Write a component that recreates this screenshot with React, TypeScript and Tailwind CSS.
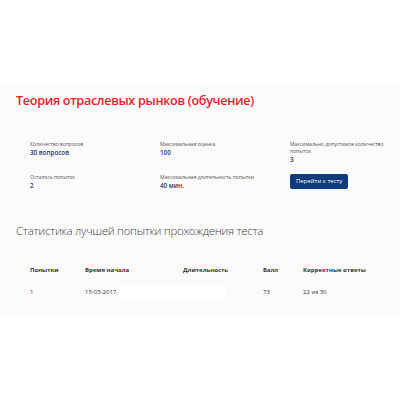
import React from 'react';

const info = [
  { label: 'Количество вопросов', value: '30 вопросов' },
  { label: 'Максимальная оценка', value: '100' },
  { label: 'Максимально допустимое количество попыток', value: '3' },
  { label: 'Осталось попыток', value: '2' },
  { label: 'Максимальная длительность попытки', value: '40 мин.' },
];

export default function App() {
  return (
    <div className="w-[400px] h-[400px] bg-white pt-[85px]" style={{ fontFamily: '"Open Sans", sans-serif' }}>
      <div className="bg-[#fcfafa] h-[229px] pt-[6px]">
        <h1 className="pl-4 text-[12.6px] leading-[20px] font-semibold tracking-[-0.3px] text-[#ee1c2e]">
          Теория отраслевых рынков (обучение)
        </h1>

        <div className="grid grid-cols-[130px_130px_108px] pl-[30px] mt-[30px] gap-y-[10px]">
          {info.map((it, i) => (
            <div key={it.label} className={i === 2 ? 'w-[100px]' : 'pr-4'}>
              <div className="text-[5px] leading-[7px] text-[#555]">{it.label}</div>
              <div className="text-[6.3px] leading-[9px] font-semibold text-[#22396a]">{it.value}</div>
            </div>
          ))}
          <div className="flex items-start">
            <button className="h-[15px] px-[6px] rounded-[2px] bg-[#0c3b7e] text-white text-[6px] leading-[15px]">
              Перейти к тесту
            </button>
          </div>
        </div>

        <h2 className="pl-4 mt-[32px] text-[11.5px] leading-[18px] font-light tracking-[-0.3px] text-[#444]">
          Статистика лучшей попытки прохождения теста
        </h2>

        <table className="ml-[30px] mt-[24px] text-[6px] text-[#333] border-collapse">
          <thead>
            <tr className="h-[12px] text-left">
              <th className="w-[55px] p-0 font-bold">Попытки</th>
              <th className="w-[98px] p-0 font-bold">Время начала</th>
              <th className="w-[80px] p-0 font-bold">Длительность</th>
              <th className="w-[40px] p-0 font-bold">Балл</th>
              <th className="p-0 font-bold">Корректные ответы</th>
            </tr>
          </thead>
          <tbody>
            <tr className="h-[32px]">
              <td className="p-0">1</td>
              <td className="p-0">15-03-2017</td>
              <td className="relative p-0">
                <div className="absolute left-[-63px] top-[10px] w-[106px] h-[13px] bg-white" />
              </td>
              <td className="p-0">73</td>
              <td className="p-0">22 из 30</td>
            </tr>
          </tbody>
        </table>
      </div>
    </div>
  );
}
